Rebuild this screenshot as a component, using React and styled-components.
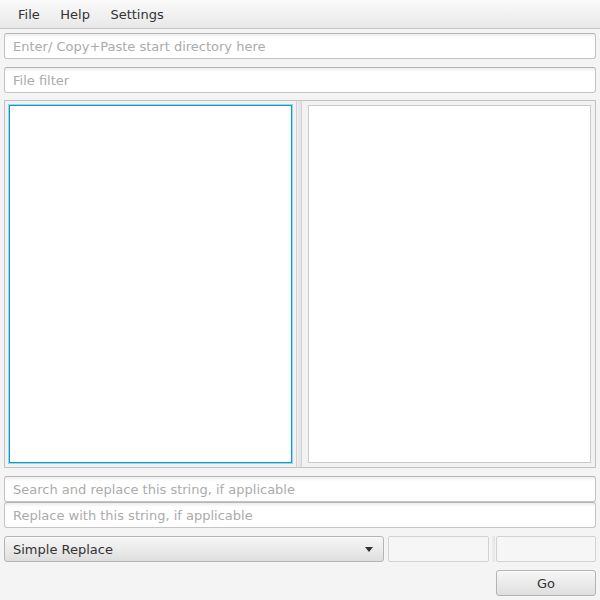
import styled, { createGlobalStyle } from "styled-components";

const GlobalStyle = createGlobalStyle`
  html, body {
    margin: 0;
    padding: 0;
    background: #f4f4f4;
  }
  * { box-sizing: border-box; }
`;

const Window = styled.div`
  width: 600px;
  height: 600px;
  display: flex;
  flex-direction: column;
  background: #f4f4f4;
  font-family: "DejaVu Sans", "Liberation Sans", sans-serif;
  font-size: 13px;
  color: #333;
  overflow: hidden;
`;

const MenuBar = styled.div`
  height: 29px;
  display: flex;
  align-items: center;
  padding-left: 8px;
  background: linear-gradient(to bottom, #fbfbfb 0%, #f3f3f3 40%, #e8e8e8 100%);
  border-bottom: 1px solid #c6c6c6;
`;

const MenuItem = styled.div`
  padding: 0 10.5px 0 10px;
  line-height: 29px;
  color: #333;
`;

const Content = styled.div`
  flex: 1;
  display: flex;
  flex-direction: column;
  padding: 4px;
`;

const Field = styled.input`
  display: block;
  width: 100%;
  height: 26px;
  margin: 0 0 ${({ $after }) => $after ?? 0}px 0;
  padding: 0 8px;
  border: 1px solid #c4c4c4;
  border-top-color: #b6b6b6;
  border-radius: 3px;
  background: linear-gradient(to bottom, #ededed 0px, #ffffff 4px);
  font: inherit;
  color: #333;
  outline: none;
  &::placeholder {
    color: #ababab;
  }
`;

const SplitPane = styled.div`
  height: 368px;
  margin-bottom: 8px;
  display: flex;
  padding: 4px;
  border: 1px solid #c2c2c2;
  background: #f2f2f2;
`;

const ListView = styled.div`
  width: 283px;
  height: 100%;
  background: #ffffff;
  border: 1px solid ${({ $focused }) => ($focused ? "#039ed3" : "#cacaca")};
  box-shadow: ${({ $focused }) =>
    $focused ? "0 0 0 1px rgba(3, 158, 211, 0.35)" : "none"};
`;

const Divider = styled.div`
  width: 6px;
  margin: -4px 6px -4px 4px;
  border-left: 1px solid #d2d2d2;
  border-right: 1px solid #d2d2d2;
  background: linear-gradient(to right, #eeeeee, #e2e2e2);
`;

const BottomRow = styled.div`
  display: flex;
  height: 26px;
  margin-bottom: 8px;
`;

const Combo = styled.div`
  width: 381px;
  height: 26px;
  margin-right: 4px;
  display: flex;
  align-items: center;
  justify-content: space-between;
  padding: 0 10px 0 8px;
  border: 1px solid #b4b4b4;
  border-radius: 3px;
  background: linear-gradient(to bottom, #f6f6f6 0%, #ebebeb 50%, #dedede 100%);
  box-shadow: inset 0 1px 0 #fbfbfb;
  color: #333;
`;

const Arrow = styled.span`
  width: 0;
  height: 0;
  border-left: 4px solid transparent;
  border-right: 4px solid transparent;
  border-top: 5px solid #333;
`;

const DisabledField = styled.div`
  width: ${({ $w }) => $w}px;
  height: 26px;
  border: 1px solid #d2d2d2;
  border-radius: 2px;
  background: #f6f6f6;
`;

const Gutter = styled.div`
  width: 7px;
  display: flex;
  justify-content: center;
  &::after {
    content: "";
    width: 3px;
    margin-left: 1px;
    background: linear-gradient(to right, #eeeeee, #e4e4e4);
  }
`;

const ButtonRow = styled.div`
  display: flex;
  justify-content: flex-end;
`;

const Button = styled.button`
  width: 100px;
  height: 26px;
  padding: 0;
  border: 1px solid #b4b4b4;
  border-radius: 3px;
  background: linear-gradient(to bottom, #f6f6f6 0%, #ebebeb 50%, #dedede 100%);
  box-shadow: inset 0 1px 0 #fbfbfb;
  font: inherit;
  color: #333;
`;

export default function App() {
  return (
    <>
      <GlobalStyle />
      <Window>
        <MenuBar>
          <MenuItem>File</MenuItem>
          <MenuItem>Help</MenuItem>
          <MenuItem>Settings</MenuItem>
        </MenuBar>
        <Content>
          <Field $after={8} placeholder="Enter/ Copy+Paste start directory here" />
          <Field $after={7} placeholder="File filter" />
          <SplitPane>
            <ListView $focused />
            <Divider />
            <ListView />
          </SplitPane>
          <Field placeholder="Search and replace this string, if applicable" />
          <Field $after={8} placeholder="Replace with this string, if applicable" />
          <BottomRow>
            <Combo>
              <span>Simple Replace</span>
              <Arrow />
            </Combo>
            <DisabledField $w={101} />
            <Gutter />
            <DisabledField $w={100} />
          </BottomRow>
          <ButtonRow>
            <Button>Go</Button>
          </ButtonRow>
        </Content>
      </Window>
    </>
  );
}
